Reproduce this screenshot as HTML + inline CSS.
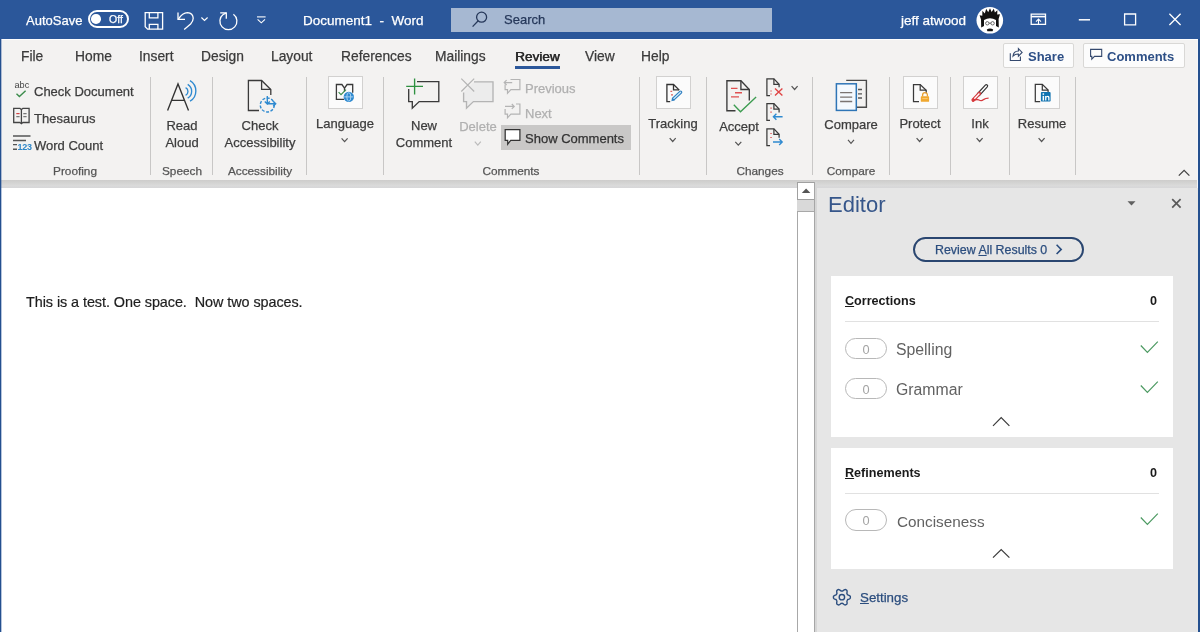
<!DOCTYPE html>
<html><head><meta charset="utf-8">
<style>
*{margin:0;padding:0;box-sizing:border-box}
html,body{width:1200px;height:632px;overflow:hidden;background:#fff;font-family:"Liberation Sans",sans-serif;position:relative}
.t{position:absolute;line-height:0;white-space:pre;will-change:transform;-webkit-text-stroke:0.25px currentColor}
.c{transform:translateX(-50%)}
.b{position:absolute}
svg{position:absolute;left:0;top:0;overflow:visible}
</style></head><body>
<div class="b" style="left:0px;top:0px;width:1200px;height:39px;background:#2b579a"></div>
<div class="b" style="left:0px;top:39px;width:1200px;height:1px;background:#fdfdfd"></div>
<div class="t" style="left:26px;top:21px;font-size:13px;color:#fff;">AutoSave</div>
<div class="b" style="left:87.5px;top:10px;width:41.5px;height:17.5px;border:2px solid #fff;border-radius:9px"></div>
<div class="b" style="left:91.3px;top:14px;width:9.6px;height:9.6px;border-radius:50%;background:#fff"></div>
<div class="t" style="left:108.5px;top:19px;font-size:10.5px;color:#fff;">Off</div>
<svg width="1200" height="38">
 <g fill="none" stroke="#fff" stroke-width="1.3">
  <path d="M145.2 12.7H162.6V29.2H147.6L145.2 26.8z"/>
  <path d="M149.3 12.7v5.2h8.6v-5.2"/>
  <path d="M149.3 29.2v-4.8h8.6v4.8"/>
  <path d="M178 12.5V19.4H185"/>
  <path d="M178.4 19.2Q182.5 12.6 187.5 12.6Q193 13 193.2 18.2Q193.2 21.2 190.6 24L184.2 29.6"/>
  <path d="M201.4 17.5l3.1 3 3.1-3" stroke-width="1.15"/>
  <path d="M220.2 12.9H226.3V18.8"/>
  <path d="M233.4 14.3A8.5 8.5 0 1 1 223.4 14.3L226.2 13"/>
  <path d="M257 16.9h8.6" stroke-width="1.1"/>
  <path d="M257.6 19.4l3.7 3.4 3.7-3.4" stroke-width="1.1"/>
  <path d="M1031.2 14.2h14.3v10.2h-14.3z" stroke-width="1.3"/>
  <path d="M1031.2 16.6h14.3" stroke-width="1.6"/>
  <path d="M1038.5 25v-5.8M1036 21.6l2.5-2.5 2.5 2.5" stroke-width="1.1"/>
  <path d="M1078.8 19.8h11.2" stroke-width="1.5"/>
  <path d="M1124.6 14h11v10.8h-11z" stroke-width="1.3"/>
  <path d="M1169.4 13.8l11.2 11.2M1180.6 13.8l-11.2 11.2" stroke-width="1.3"/>
 </g>
 <rect x="451" y="8" width="321" height="24" fill="#a6b8d2"/>
 <g fill="none" stroke="#26385a" stroke-width="1.3">
  <circle cx="481.6" cy="17.2" r="5"/>
  <path d="M478.2 20.8l-5.6 5.8"/>
 </g>
 <circle cx="989.8" cy="20.3" r="13.3" fill="#fff"/>
 <path d="M981.2 27.5 L981 19.5 L979.6 15.2 L982.3 15.8 L982.4 10.8 L984.8 13.4 L986.2 8.8 L988.2 12.2 L990 8.2 L991.6 12 L993.8 8.8 L994.9 12.6 L997.4 10.2 L997.2 14.6 L1000 14.2 L998.6 19 L998.8 27.5 L996 26 L996 20 Q990 16.5 984 20 L984 26z" fill="#111"/>
 <path d="M984.2 21 Q990 17.5 995.8 21 L995.6 27 Q994 31.5 990 32 Q986 31.5 984.4 27z" fill="#fff"/>
 <g fill="none" stroke="#333" stroke-width=".7">
  <circle cx="987.3" cy="23.3" r="1.7"/><circle cx="992.6" cy="23.3" r="1.7"/><path d="M989 23.2h1.9"/>
 </g>
 <path d="M986.8 29.6 q3.2-2 6.4 0 l-.6 1.6 h-5.2z" fill="#111"/>
</svg>
<div class="t" style="left:303px;top:21px;font-size:13.5px;color:#fff;">Document1  -  Word</div>
<div class="t" style="left:504px;top:20px;font-size:13px;color:#26385a;">Search</div>
<div class="t" style="left:901px;top:21px;font-size:13.5px;color:#fff;">jeff atwood</div>
<div class="b" style="left:0px;top:40px;width:1200px;height:140px;background:#f3f2f1"></div>
<div class="t" style="left:20.5px;top:57px;font-size:13.8px;color:#3b3b3b;">File</div>
<div class="t" style="left:75px;top:57px;font-size:13.8px;color:#3b3b3b;">Home</div>
<div class="t" style="left:139.3px;top:57px;font-size:13.8px;color:#3b3b3b;">Insert</div>
<div class="t" style="left:201.3px;top:57px;font-size:13.8px;color:#3b3b3b;">Design</div>
<div class="t" style="left:271.3px;top:57px;font-size:13.8px;color:#3b3b3b;">Layout</div>
<div class="t" style="left:340.6px;top:57px;font-size:13.8px;color:#3b3b3b;">References</div>
<div class="t" style="left:434.5px;top:57px;font-size:13.8px;color:#3b3b3b;">Mailings</div>
<div class="t" style="left:584.7px;top:57px;font-size:13.8px;color:#3b3b3b;">View</div>
<div class="t" style="left:641px;top:57px;font-size:13.8px;color:#3b3b3b;">Help</div>
<div class="t" style="left:515px;top:57px;font-size:13.6px;color:#2a2a2a;text-shadow:0.4px 0 0 #2a2a2a;">Review</div>
<div class="b" style="left:514.5px;top:66px;width:45.5px;height:3px;background:#2b579a"></div>
<div class="b" style="left:1002.5px;top:42.5px;width:71px;height:25px;background:#fcfcfc;border:1px solid #d9d8d6;border-radius:2px"></div>
<div class="b" style="left:1082.5px;top:42.5px;width:102px;height:25px;background:#fcfcfc;border:1px solid #d9d8d6;border-radius:2px"></div>
<div class="t" style="left:1027.5px;top:57px;font-size:13px;color:#2d4f86;font-weight:bold;-webkit-text-stroke:0;">Share</div>
<div class="t" style="left:1107px;top:57px;font-size:13px;color:#2d4f86;font-weight:bold;-webkit-text-stroke:0;">Comments</div>
<svg width="1200" height="80">
 <g fill="none" stroke="#34496e" stroke-width="1.1">
  <path d="M1010.3 53.2V60.5H1020.4V56.6"/>
  <path d="M1013 56.2Q1013.4 51.2 1018.4 51V48.7L1022.1 52.4L1018.4 56.2V54Q1015.2 53.8 1013 56.2z"/>
  <path d="M1090.6 49.4h11.1v7h-7.2l-2.7 2.8v-2.8h-1.2z"/>
 </g>
</svg>
<div class="b" style="left:150px;top:77px;width:1px;height:98px;background:#c8c7c6"></div>
<div class="b" style="left:212px;top:77px;width:1px;height:98px;background:#c8c7c6"></div>
<div class="b" style="left:306px;top:77px;width:1px;height:98px;background:#c8c7c6"></div>
<div class="b" style="left:383px;top:77px;width:1px;height:98px;background:#c8c7c6"></div>
<div class="b" style="left:638.5px;top:77px;width:1px;height:98px;background:#c8c7c6"></div>
<div class="b" style="left:706px;top:77px;width:1px;height:98px;background:#c8c7c6"></div>
<div class="b" style="left:812px;top:77px;width:1px;height:98px;background:#c8c7c6"></div>
<div class="b" style="left:888.5px;top:77px;width:1px;height:98px;background:#c8c7c6"></div>
<div class="b" style="left:950px;top:77px;width:1px;height:98px;background:#c8c7c6"></div>
<div class="b" style="left:1008.5px;top:77px;width:1px;height:98px;background:#c8c7c6"></div>
<div class="b" style="left:1074.5px;top:77px;width:1px;height:98px;background:#c8c7c6"></div>
<div class="b" style="left:327.5px;top:76.3px;width:35px;height:33.2px;background:#fbfbfb;border:1.4px solid #d2d1d0"></div>
<div class="b" style="left:656px;top:76.3px;width:35px;height:33.2px;background:#fbfbfb;border:1.4px solid #d2d1d0"></div>
<div class="b" style="left:903px;top:76.3px;width:35px;height:33.2px;background:#fbfbfb;border:1.4px solid #d2d1d0"></div>
<div class="b" style="left:962.5px;top:76.3px;width:35px;height:33.2px;background:#fbfbfb;border:1.4px solid #d2d1d0"></div>
<div class="b" style="left:1024.5px;top:76.3px;width:35px;height:33.2px;background:#fbfbfb;border:1.4px solid #d2d1d0"></div>
<div class="b" style="left:501px;top:125px;width:130px;height:24.5px;background:#c9c8c7"></div>
<div class="t" style="left:34px;top:92px;font-size:13px;color:#3d3d3d;">Check Document</div>
<div class="t" style="left:34px;top:119px;font-size:13px;color:#3d3d3d;">Thesaurus</div>
<div class="t" style="left:34px;top:146px;font-size:13px;color:#3d3d3d;">Word Count</div>
<div class="t c" style="left:75.2px;top:171px;font-size:11.8px;color:#555;">Proofing</div>
<div class="t c" style="left:182.2px;top:126px;font-size:13px;color:#3d3d3d;">Read</div>
<div class="t c" style="left:181.6px;top:143px;font-size:13px;color:#3d3d3d;">Aloud</div>
<div class="t c" style="left:181.5px;top:171px;font-size:11.8px;color:#555;">Speech</div>
<div class="t c" style="left:259.6px;top:126px;font-size:13px;color:#3d3d3d;">Check</div>
<div class="t c" style="left:259.8px;top:143px;font-size:13px;color:#3d3d3d;">Accessibility</div>
<div class="t c" style="left:259.5px;top:171px;font-size:11.8px;color:#555;">Accessibility</div>
<div class="t c" style="left:345.2px;top:124px;font-size:13px;color:#3d3d3d;">Language</div>
<div class="t c" style="left:424.1px;top:126px;font-size:13px;color:#3d3d3d;">New</div>
<div class="t c" style="left:424.2px;top:143px;font-size:13px;color:#3d3d3d;">Comment</div>
<div class="t c" style="left:478.2px;top:127px;font-size:13px;color:#b0b0b0;">Delete</div>
<div class="t" style="left:525px;top:89px;font-size:13px;color:#b0b0b0;">Previous</div>
<div class="t" style="left:525px;top:114px;font-size:13px;color:#b0b0b0;">Next</div>
<div class="t" style="left:525px;top:139px;font-size:13px;color:#333;">Show Comments</div>
<div class="t c" style="left:511px;top:171px;font-size:11.8px;color:#555;">Comments</div>
<div class="t c" style="left:673.3px;top:124px;font-size:13px;color:#3d3d3d;">Tracking</div>
<div class="t c" style="left:739px;top:127px;font-size:13px;color:#3d3d3d;">Accept</div>
<div class="t c" style="left:759.5px;top:171px;font-size:11.8px;color:#555;">Changes</div>
<div class="t c" style="left:851.1px;top:125px;font-size:13px;color:#3d3d3d;">Compare</div>
<div class="t c" style="left:850.9px;top:171px;font-size:11.8px;color:#555;">Compare</div>
<div class="t c" style="left:920.3px;top:124px;font-size:13px;color:#3d3d3d;">Protect</div>
<div class="t c" style="left:980px;top:124px;font-size:13px;color:#3d3d3d;">Ink</div>
<div class="t c" style="left:1042.2px;top:124px;font-size:13px;color:#3d3d3d;">Resume</div>
<svg width="1200" height="200">
<path d="M341.6 138.3l3.0 3.4 3.0 -3.4" fill="none" stroke="#555" stroke-width="1.2"/><path d="M474.8 141.70000000000002l3.0 3.4 3.0 -3.4" fill="none" stroke="#bbb" stroke-width="1.2"/><path d="M669.7 138.10000000000002l3.0 3.4 3.0 -3.4" fill="none" stroke="#555" stroke-width="1.2"/><path d="M735.3 141.8l3.0 3.4 3.0 -3.4" fill="none" stroke="#555" stroke-width="1.2"/><path d="M791.6 86.1l3.0 3.4 3.0 -3.4" fill="none" stroke="#555" stroke-width="1.2"/><path d="M848.0 139.9l3.0 3.4 3.0 -3.4" fill="none" stroke="#555" stroke-width="1.2"/><path d="M916.6 138.10000000000002l3.0 3.4 3.0 -3.4" fill="none" stroke="#555" stroke-width="1.2"/><path d="M976.6 138.10000000000002l3.0 3.4 3.0 -3.4" fill="none" stroke="#555" stroke-width="1.2"/><path d="M1038.6 138.10000000000002l3.0 3.4 3.0 -3.4" fill="none" stroke="#555" stroke-width="1.2"/>
<path d="M1178.8 175.6l5.3-5.3 5.3 5.3" fill="none" stroke="#444" stroke-width="1.3"/>
<!-- check document -->
<text x="14.5" y="88.4" font-family="Liberation Sans" font-size="9.2" fill="#444">abc</text>
<path d="M16.5 93.8l2.9 2.8 6.2-5.9" fill="none" stroke="#3c8c4c" stroke-width="1.4"/>
<!-- thesaurus -->
<g fill="none" stroke="#444" stroke-width="1.3">
 <path d="M13.7 108.3h6.2l1.5 1.3 1.5-1.3h6.2v14.2h-6.2l-1.5 1.2-1.5-1.2h-6.2z"/>
 <path d="M21.4 109.6v13.6"/>
</g>
<path d="M16.3 113.6h3.3" stroke="#d04040" stroke-width="1.2"/>
<path d="M16.3 116.6h3.3M23.3 113.6h3.3M23.3 116.6h3.3" stroke="#777" stroke-width="1.2"/>
<!-- word count -->
<path d="M13 136h17.5M13 140.5h13M13 144.6h4M13 149.2h4" stroke="#555" stroke-width="1.4"/>
<text x="17.6" y="149.8" font-family="Liberation Sans" font-size="9" font-weight="bold" fill="#2f87c8" letter-spacing="-0.3">123</text>
<!-- read aloud -->
<g fill="none" stroke="#333" stroke-width="1.35">
 <path d="M167.6 110.5l10.4-26.6 10.5 26.6M172 100.4h12.2"/>
</g>
<g fill="none" stroke="#2f8ad0" stroke-width="1.35">
 <path d="M185.6 87.6a4.4 4.4 0 0 1 0 7.8"/>
 <path d="M187.7 84.4a8 8 0 0 1 0 13.8"/>
 <path d="M190 80.6a12 12 0 0 1 0 20.6"/>
</g>
<!-- check accessibility -->
<g fill="none" stroke="#3a3a3a" stroke-width="1.3">
 <path d="M259 110.5h-10.6v-30h13.2l9.2 9v5.6"/>
 <path d="M261.6 80.5v8.8h9.2"/>
</g>
<circle cx="267.3" cy="105" r="7" fill="none" stroke="#2f8ad0" stroke-width="1.4" stroke-dasharray="3 1.6"/>
<g fill="none" stroke="#2f8ad0" stroke-width="1.4">
 <path d="M267.3 96v8M264.8 101.5l2.5 2.6 2.5-2.6"/>
 <path d="M267.3 103.8h8.2M273.2 101.3l2.5 2.5-2.5 2.5"/>
</g>
<!-- language -->
<g fill="none" stroke="#3a3a3a" stroke-width="1.3">
 <path d="M344 99.3h-7.6v-14.8h5.5l2.6 3.6 2.6-3.6h5.6v8.2"/>
 <path d="M344.5 88v3.5"/>
</g>
<path d="M338.6 92.2l2.4 2.4 5-5" fill="none" stroke="#3c8c4c" stroke-width="1.2"/>
<circle cx="348.8" cy="96.9" r="5.2" fill="#2f8ad0"/>
<g fill="none" stroke="#bfe0f7" stroke-width=".8"><ellipse cx="348.8" cy="96.9" rx="2" ry="4.2"/><path d="M344.2 96.9h9.2"/></g>
<!-- new comment -->
<g fill="none" stroke="#3a3a3a" stroke-width="1.35">
 <path d="M417 81.6h21.8v20h-19.6l-6.9 6.6v-6.6h-3.6v-12.6"/>
</g>
<path d="M414.6 78.5v16M406.2 86.3h16.8" stroke="#2e9140" stroke-width="1.35"/>
<!-- delete -->
<path d="M474 81.8h19v19.8h-19.6l-6.9 6.6v-6.6h-2.9v-9" fill="#ececec" stroke="#b4b4b4" stroke-width="1.35"/>
<path d="M461.3 78.6l12.9 12.9M474.2 78.6l-12.9 12.9" stroke="#b4b4b4" stroke-width="1.2"/>
<!-- previous / next / show -->
<g fill="none" stroke="#b4b4b4" stroke-width="1.2">
 <path d="M510.5 79.5h9.4v10.2h-9l-3.4 3.6v-3.6h-2.4v-5.2"/>
 <path d="M504.2 82.6h8M506.6 80.2l-2.4 2.4 2.4 2.4"/>
 <path d="M516 104h3.9v10.2h-9l-3.4 3.6v-3.6h-2.4v-5.2"/>
 <path d="M505 106.4h9M511.8 104l2.4 2.4-2.4 2.4"/>
</g>
<path d="M505.2 129.5h14.7v10.8h-9.2l-3 3.8v-3.8h-2.5z" fill="#fff" stroke="#333" stroke-width="1.25"/>
<!-- tracking -->
<g fill="none" stroke="#333" stroke-width="1.3">
 <path d="M670.2 101.7h-3.3v-17.2h6.6l5.8 5.6"/>
 <path d="M673.5 84.5v5.3h5.6"/>
</g>
<path d="M670.4 91.3h1.8M671 94.8h2" stroke="#e06060" stroke-width="1.3"/>
<path d="M673.6 98.8L680.6 92.2" stroke="#2f7fc0" stroke-width="3.4" stroke-linecap="round"/>
<path d="M673.6 98.8L680.6 92.2" stroke="#cfe8fa" stroke-width="1.2" stroke-linecap="round"/>
<path d="M671.3 101.3L672.2 97.6L674.9 100.2z" fill="#2f7fc0"/>
<!-- accept -->
<g fill="none" stroke="#3a3a3a" stroke-width="1.35">
 <path d="M735.5 110.7h-8.6v-30h14l8.4 8.8v11"/>
 <path d="M740.9 80.7v8.8h8.4"/>
</g>
<path d="M731 88.4h6.5M735 92.7h7M731 96.9h8" stroke="#e05050" stroke-width="1.4"/>
<path d="M733.8 104.7l6.7 7.1 15.6-14.9" fill="none" stroke="#3c9c50" stroke-width="1.35"/>
<!-- small change icons -->
<g fill="none" stroke="#3a3a3a" stroke-width="1.25">
 <path d="M770 95.7h-3.1v-16.9h7l5.2 5.5v3"/><path d="M773.9 78.8v5.5h5.2"/>
 <path d="M770 120.3h-3.1v-16.8h7l5.2 5.5v3.5"/><path d="M773.9 103.5v5.5h5.2"/>
 <path d="M770 145.6h-3.1v-16.8h7l5.2 5.5v3.5"/><path d="M773.9 128.8v5.5h5.2"/>
</g>
<path d="M770.3 91h1.5M770.3 94h1.5M770.3 108.2h1.5M770.3 112.2h1.5M770.3 133.5h1.5M770.3 137.5h1.5" stroke="#e06060" stroke-width="1.2"/>
<path d="M775 88.6l7.4 7M782.4 88.6l-7.4 7" stroke="#e04444" stroke-width="1.35"/>
<path d="M773.4 116.7h9.2M776.4 113.7l-3 3 3 3" fill="none" stroke="#2f8ad0" stroke-width="1.35"/>
<path d="M773 142h9.2M779.2 139l3 3-3 3" fill="none" stroke="#2f8ad0" stroke-width="1.35"/>
<!-- compare -->
<g fill="none" stroke="#4a4a4a" stroke-width="1.4">
 <path d="M846.2 80.4h20.2v26.8h-10"/>
</g>
<path d="M858 89.5h4M858 93.9h4M858 98h4" stroke="#555" stroke-width="1.3"/>
<rect x="836.4" y="83.8" width="19.9" height="26.6" fill="#f4f9fe" stroke="#2e75b6" stroke-width="1.5"/>
<path d="M840.1 92.7h12.1M840.1 97.1h12.1M840.1 101.5h12.1" stroke="#7a7472" stroke-width="1.3"/>
<!-- protect -->
<g fill="none" stroke="#3a3a3a" stroke-width="1.25">
 <path d="M919 101.7h-5.5v-17.2h6.7l6 5.7v3"/><path d="M920.2 84.5v5.7h6"/>
</g>
<path d="M922.6 96.5v-1.5a2.4 2.4 0 0 1 4.8 0v1.5" fill="none" stroke="#e8a030" stroke-width="1.3"/>
<rect x="920.8" y="96.3" width="8.3" height="5.5" rx=".6" fill="#f0a830"/>
<path d="M922.3 98.6h5.3" stroke="#ffd890" stroke-width=".7"/>
<!-- ink -->
<path d="M978.6 94.4L986.3 86" stroke="#333" stroke-width="3.8" stroke-linecap="round"/>
<path d="M978.6 94.4L986.3 86" stroke="#fff" stroke-width="1.5" stroke-linecap="round"/>
<path d="M973.2 100L979.4 93.5" stroke="#d63a3e" stroke-width="3.6" stroke-linecap="round"/>
<path d="M974.3 98.8L979.4 93.5" stroke="#fff" stroke-width="1.3"/>
<path d="M972.2 101.2Q976 98.6 979 100Q981.5 101.4 983.5 99.6Q985.5 98.2 988.6 98.2" fill="none" stroke="#d63a3e" stroke-width="1.3"/>
<!-- resume -->
<g fill="none" stroke="#3a3a3a" stroke-width="1.25">
 <path d="M1040.2 101.5h-4.9v-17.2h7l5.8 5.7v2.1"/><path d="M1042.3 84.3v5.7h5.8"/>
</g>
<rect x="1040.9" y="92.1" width="9.7" height="9.5" rx=".8" fill="#1073b0"/>
<g fill="#fff">
 <rect x="1042.6" y="93.3" width="1.5" height="1.5"/>
 <rect x="1042.6" y="95.9" width="1.5" height="4.7"/>
 <path d="M1045.1 100.6V95.9H1046.4V96.6Q1047 95.8 1048 95.8Q1049.5 95.9 1049.5 97.6V100.6H1048.2V97.9Q1048.2 97 1047.4 97Q1046.4 97 1046.4 98V100.6z"/>
</g>
</svg>
<div class="b" style="left:0px;top:180px;width:1200px;height:8px;background:linear-gradient(#cdcccb,#dadada 70%,#d6d6d8)"></div>
<div class="b" style="left:2px;top:188px;width:795px;height:444px;background:#fff"></div>
<div class="t" style="left:26px;top:302px;font-size:14.4px;color:#1e1e1e;-webkit-text-stroke:0;-webkit-text-stroke:0.2px #1e1e1e;letter-spacing:-0.06px;">This is a test. One space.  Now two spaces.</div>
<div class="b" style="left:797px;top:188px;width:18px;height:444px;background:#d9d9d9"></div>
<div class="b" style="left:797px;top:182px;width:18px;height:18px;background:#fff;border:1px solid #a0a0a0"></div>
<svg width="1200" height="632"><path d="M801.8 193h8.6l-4.3-4.6z" fill="#555"/></svg>
<div class="b" style="left:797px;top:211px;width:18px;height:440px;background:#fff;border:1px solid #a8a8a8"></div>
<div class="b" style="left:0px;top:39px;width:1px;height:593px;background:#24508f"></div>
<div class="b" style="left:1px;top:39px;width:1px;height:593px;background:rgba(43,87,154,0.35)"></div>
<div class="b" style="left:1197px;top:40px;width:1px;height:592px;background:#f4f6fa"></div>
<div class="b" style="left:1198px;top:39px;width:2px;height:593px;background:#24508f"></div>
<div class="b" style="left:815px;top:188px;width:383px;height:444px;background:#e6e6e6"></div>
<div class="b" style="left:814px;top:182px;width:1px;height:450px;background:#a6a6a6"></div>
<div class="b" style="left:815px;top:182px;width:2px;height:450px;background:#d6d6d6"></div>
<div class="t" style="left:828px;top:205px;font-size:22px;color:#36568a;-webkit-text-stroke:0;">Editor</div>
<svg width="1200" height="632">
<path d="M1127.5 201.2h8l-4 4.3z" fill="#606060"/>
<path d="M1172.2 199.2l8.4 8.4M1180.6 199.2l-8.4 8.4" stroke="#5a5a5a" stroke-width="1.7"/>
</svg>
<div class="b" style="left:912.5px;top:237px;width:171px;height:24.5px;border:2px solid #2a4670;border-radius:12.5px"></div>
<div class="t" style="left:934.7px;top:250px;font-size:12.4px;color:#2b4d7e;">Review <u>A</u>ll Results 0</div>
<svg width="1200" height="632">
<path d="M1056.6 244.8l4.6 4.6-4.6 4.6" fill="none" stroke="#2b4d7e" stroke-width="1.6"/>
</svg>
<div class="b" style="left:830.8px;top:276px;width:342px;height:161px;background:#fff"></div>
<div class="b" style="left:830.8px;top:448px;width:342px;height:121px;background:#fff"></div>
<div class="b" style="left:845px;top:321px;width:313.5px;height:1px;background:#e1e1e1"></div>
<div class="b" style="left:845px;top:493px;width:313.5px;height:1px;background:#e1e1e1"></div>
<div class="t" style="left:845px;top:301px;font-size:12.6px;color:#1a1a1a;font-weight:bold;-webkit-text-stroke:0;"><u>C</u>orrections</div>
<div class="t" style="left:1150px;top:301px;font-size:12.6px;color:#1a1a1a;font-weight:bold;-webkit-text-stroke:0;">0</div>
<div class="t" style="left:845px;top:473px;font-size:12.6px;color:#1a1a1a;font-weight:bold;-webkit-text-stroke:0;"><u>R</u>efinements</div>
<div class="t" style="left:1150px;top:473px;font-size:12.6px;color:#1a1a1a;font-weight:bold;-webkit-text-stroke:0;">0</div>
<div class="b" style="left:845.2px;top:337.5px;width:41.8px;height:21.5px;border:1.3px solid #b8b8b8;border-radius:11px;background:#fff"></div>
<div class="t c" style="left:866.2px;top:349.5px;font-size:12.8px;color:#a4a4a4;-webkit-text-stroke:0;">0</div>
<div class="b" style="left:845.2px;top:377.5px;width:41.8px;height:21.5px;border:1.3px solid #b8b8b8;border-radius:11px;background:#fff"></div>
<div class="t c" style="left:866.2px;top:389.5px;font-size:12.8px;color:#a4a4a4;-webkit-text-stroke:0;">0</div>
<div class="b" style="left:845.2px;top:509.3px;width:41.8px;height:21.5px;border:1.3px solid #b8b8b8;border-radius:11px;background:#fff"></div>
<div class="t c" style="left:866.2px;top:521.3px;font-size:12.8px;color:#a4a4a4;-webkit-text-stroke:0;">0</div>
<div class="t" style="left:896.3px;top:350px;font-size:15.8px;color:#626262;-webkit-text-stroke:0;">Spelling</div>
<div class="t" style="left:896.3px;top:389.5px;font-size:15.8px;color:#626262;-webkit-text-stroke:0;">Grammar</div>
<div class="t" style="left:896.6px;top:521.5px;font-size:15.3px;color:#626262;-webkit-text-stroke:0;">Conciseness</div>
<svg width="1200" height="632">
<g fill="none" stroke="#4c9a62" stroke-width="1.2">
 <path d="M1140.8 345.5l6.6 7 10.4-10.8"/>
 <path d="M1140.8 385.5l6.6 7 10.4-10.8"/>
 <path d="M1140.8 517.5l6.6 7 10.4-10.8"/>
</g>
<g fill="none" stroke="#3a3a3a" stroke-width="1.2">
 <path d="M993 425.9l8.2-8.2 8.2 8.2"/>
 <path d="M993 557.7l8.2-8.2 8.2 8.2"/>
</g>
<g fill="none" stroke="#2b4d7e" stroke-width="1.4">
 <path d="M850.35 597.20 L850.34 596.76 L850.30 596.32 L849.98 595.92 L849.49 595.59 L848.95 595.31 L848.40 595.09 L847.89 594.90 L847.52 594.70 L847.38 594.41 L847.23 594.12 L847.06 593.85 L846.88 593.59 L846.89 593.16 L846.98 592.62 L847.06 592.04 L847.09 591.43 L847.05 590.84 L846.87 590.36 L846.50 590.11 L846.12 589.88 L845.74 589.67 L845.34 589.48 L844.83 589.56 L844.30 589.82 L843.79 590.15 L843.32 590.51 L842.90 590.86 L842.54 591.08 L842.22 591.06 L841.90 591.05 L841.58 591.06 L841.26 591.08 L840.90 590.86 L840.48 590.51 L840.01 590.15 L839.50 589.82 L838.97 589.56 L838.46 589.48 L838.06 589.67 L837.67 589.88 L837.30 590.11 L836.93 590.36 L836.75 590.84 L836.71 591.43 L836.74 592.04 L836.82 592.62 L836.91 593.16 L836.92 593.59 L836.74 593.85 L836.57 594.12 L836.42 594.41 L836.28 594.70 L835.91 594.90 L835.40 595.09 L834.85 595.31 L834.31 595.59 L833.82 595.92 L833.50 596.32 L833.46 596.76 L833.45 597.20 L833.46 597.64 L833.50 598.08 L833.82 598.48 L834.31 598.81 L834.85 599.09 L835.40 599.31 L835.91 599.50 L836.28 599.70 L836.42 599.99 L836.57 600.28 L836.74 600.55 L836.92 600.81 L836.91 601.24 L836.82 601.78 L836.74 602.36 L836.71 602.97 L836.75 603.56 L836.93 604.04 L837.30 604.29 L837.67 604.52 L838.06 604.73 L838.46 604.92 L838.97 604.84 L839.50 604.58 L840.01 604.25 L840.48 603.89 L840.90 603.54 L841.26 603.32 L841.58 603.34 L841.90 603.35 L842.22 603.34 L842.54 603.32 L842.90 603.54 L843.32 603.89 L843.79 604.25 L844.30 604.58 L844.83 604.84 L845.34 604.92 L845.74 604.73 L846.12 604.52 L846.50 604.29 L846.87 604.04 L847.05 603.56 L847.09 602.97 L847.06 602.36 L846.98 601.78 L846.89 601.24 L846.88 600.81 L847.06 600.55 L847.23 600.28 L847.38 599.99 L847.52 599.70 L847.89 599.50 L848.40 599.31 L848.95 599.09 L849.49 598.81 L849.98 598.48 L850.30 598.08 L850.34 597.64z"/>
 <circle cx="841.9" cy="597.2" r="2.7"/>
</g>
</svg>
<div class="t" style="left:860.2px;top:598px;font-size:13.3px;color:#2b4d7e;"><u>S</u>ettings</div>
</body></html>
